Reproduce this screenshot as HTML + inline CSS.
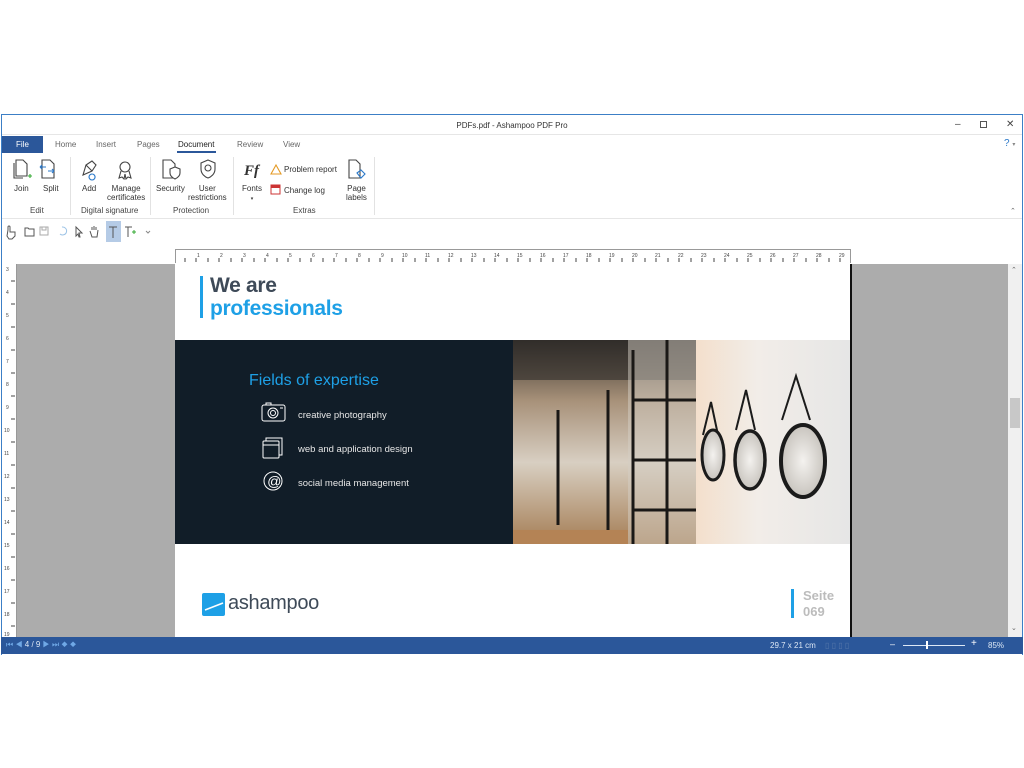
<!DOCTYPE html>
<html><head><meta charset="utf-8"><style>
*{margin:0;padding:0;box-sizing:border-box}
body{width:1024px;height:768px;background:#fff;position:relative;font-family:"Liberation Sans",sans-serif;overflow:hidden}
.a{position:absolute}
.t{font-size:8px;color:#444;white-space:nowrap}
.tab{position:absolute;top:140px;font-size:8px;color:#666}
.lbl{position:absolute;font-size:8px;color:#333;text-align:center;line-height:9px;white-space:nowrap}
.grp{position:absolute;top:206px;font-size:8px;color:#444;white-space:nowrap}
.sep{position:absolute;top:157px;width:1px;height:58px;background:#e2e2e2}
</style></head><body>
<div class="a" style="left:1px;top:114px;width:1022px;height:541px;border:1px solid #3c7fc6;border-bottom:none"></div>
<div class="a t" style="left:0;width:1024px;top:121px;text-align:center;color:#333">PDFs.pdf - Ashampoo PDF Pro</div>
<div class="a t" style="left:955px;top:119px;font-size:10px">–</div>
<div class="a" style="left:980px;top:121px;width:7px;height:7px;border:1px solid #555"></div>
<div class="a t" style="left:1006px;top:119px;font-size:10px">✕</div>
<div class="a" style="left:2px;top:134px;width:1020px;height:1px;background:#e6e6e6"></div>
<div class="a" style="left:2px;top:136px;width:41px;height:17px;background:#2b579a;color:#fff;font-size:8px;text-align:center;line-height:17px">File</div>
<div class="tab" style="left:55px">Home</div>
<div class="tab" style="left:96px">Insert</div>
<div class="tab" style="left:137px">Pages</div>
<div class="tab" style="left:178px;color:#222">Document</div>
<div class="a" style="left:177px;top:151px;width:39px;height:2px;background:#2b579a"></div>
<div class="tab" style="left:237px">Review</div>
<div class="tab" style="left:283px">View</div>
<div class="a t" style="left:1004px;top:138px;color:#2b79c9;font-size:10px">? <span style="color:#888;font-size:6px">▾</span></div>
<svg class="a" style="left:0;top:155px" width="380" height="30" fill="none" stroke="#444" stroke-width="1.1">
<path d="M16 5h7l4 4v12h-11z M14 8v15h9"/><path d="M28 21h4M30 19v4" stroke="#3a3"/>
<path d="M42 5h8l4 4v14h-12z"/><path d="M40 12h6M40 12l2-2M40 12l2 2M48 16h6M54 16l-2-2M54 16l-2 2" stroke="#2b79c9"/>
<path d="M83 20l3-10 6-4 4 4-4 6zM86 10l6 6"/><path d="M92 19a3 3 0 1 0 .1 0" stroke="#2b79c9"/>
<circle cx="125" cy="12" r="5"/><path d="M121 16l-2 7 3-1 2 2 1-5M129 16l2 7-3-1-2 2-1-5"/>
<path d="M163 5h8l4 4v14h-12z"/><path d="M170 14l5-2 5 2v4c0 3-3 5-5 6-2-1-5-3-5-6z" fill="#fff"/>
<path d="M208 5l7 3v6c0 5-4 8-7 9-3-1-7-4-7-9v-6z"/><circle cx="208" cy="13" r="3"/>
<text x="244" y="20" font-family="Liberation Serif" font-style="italic" font-weight="bold" font-size="15" fill="#333" stroke="none">Ff</text>
<path d="M276 10l5 9h-10z" stroke="#e49a25"/>
<path d="M349 5h7l4 4v14h-11z"/><path d="M357 18l4-3 4 4-4 4z" stroke="#2b79c9"/>
</svg>
<svg class="a" style="left:270px;top:183px" width="12" height="12"><rect x="1" y="2" width="9" height="9" fill="#fff" stroke="#c33"/><rect x="1" y="2" width="9" height="3" fill="#c33"/></svg>
<div class="lbl" style="left:14px;top:184px">Join</div>
<div class="lbl" style="left:43px;top:184px">Split</div>
<div class="lbl" style="left:82px;top:184px">Add</div>
<div class="lbl" style="left:107px;top:184px">Manage<br>certificates</div>
<div class="lbl" style="left:156px;top:184px">Security</div>
<div class="lbl" style="left:188px;top:184px">User<br>restrictions</div>
<div class="lbl" style="left:242px;top:184px">Fonts<br><span style="font-size:5px">▾</span></div>
<div class="lbl" style="left:284px;top:165px">Problem report</div>
<div class="lbl" style="left:284px;top:186px">Change log</div>
<div class="lbl" style="left:346px;top:184px">Page<br>labels</div>
<div class="grp" style="left:30px">Edit</div>
<div class="grp" style="left:81px">Digital signature</div>
<div class="grp" style="left:173px">Protection</div>
<div class="grp" style="left:293px">Extras</div>
<div class="sep" style="left:70px"></div><div class="sep" style="left:150px"></div><div class="sep" style="left:233px"></div><div class="sep" style="left:374px"></div>
<div class="a t" style="left:1010px;top:207px;font-size:7px;color:#666">⌃</div>
<div class="a" style="left:2px;top:218px;width:1020px;height:1px;background:#e6e6e6"></div>
<div class="a" style="left:106px;top:221px;width:15px;height:21px;background:#b5cbe6"></div>
<svg class="a" style="left:0;top:222px" width="160" height="20" fill="none" stroke="#555" stroke-width="1">
<path d="M8 8v-3a1 1 0 0 1 2 0v5h5v4l-3 3h-3l-2-3z"/>
<path d="M25 6h3l1 1h5v7h-9z"/><path d="M40 5h8v8h-8z M42 5v3h4v-3" stroke="#aaa"/>
<path d="M62 5a4 4 0 1 1-2 7" stroke="#9cc3e6"/><path d="M76 5l6 6h-3l1 4h-1l-1-3-2 2z"/>
<path d="M92 8v-3M94 8v-4M96 8v-3M90 9l2 6h5l1-7"/>
<path d="M109 5h8M113 5v11"/><path d="M125 5h7M128 5v10" /><path d="M132 10h4M134 8v4" stroke="#3a3"/>
<path d="M146 9l2 2 2-2" stroke="#888"/>
</svg>
<div class="a" style="left:175px;top:249px;width:676px;height:14px;border:1px solid #999;border-bottom:none;background:#fff"></div>
<svg class="a" style="left:175px;top:249px" width="676" height="15" font-size="5" fill="#444" font-family="Liberation Sans">
<g stroke="#444">
<line x1="10" y1="9" x2="10" y2="13"/><line x1="21" y1="9" x2="21" y2="13"/><line x1="33" y1="9" x2="33" y2="13"/><line x1="44" y1="9" x2="44" y2="13"/><line x1="56" y1="9" x2="56" y2="13"/><line x1="67" y1="9" x2="67" y2="13"/><line x1="79" y1="9" x2="79" y2="13"/><line x1="90" y1="9" x2="90" y2="13"/><line x1="102" y1="9" x2="102" y2="13"/><line x1="113" y1="9" x2="113" y2="13"/><line x1="125" y1="9" x2="125" y2="13"/><line x1="136" y1="9" x2="136" y2="13"/><line x1="148" y1="9" x2="148" y2="13"/><line x1="159" y1="9" x2="159" y2="13"/><line x1="171" y1="9" x2="171" y2="13"/><line x1="182" y1="9" x2="182" y2="13"/><line x1="194" y1="9" x2="194" y2="13"/><line x1="205" y1="9" x2="205" y2="13"/><line x1="217" y1="9" x2="217" y2="13"/><line x1="228" y1="9" x2="228" y2="13"/><line x1="240" y1="9" x2="240" y2="13"/><line x1="251" y1="9" x2="251" y2="13"/><line x1="263" y1="9" x2="263" y2="13"/><line x1="274" y1="9" x2="274" y2="13"/><line x1="286" y1="9" x2="286" y2="13"/><line x1="297" y1="9" x2="297" y2="13"/><line x1="309" y1="9" x2="309" y2="13"/><line x1="320" y1="9" x2="320" y2="13"/><line x1="332" y1="9" x2="332" y2="13"/><line x1="343" y1="9" x2="343" y2="13"/><line x1="355" y1="9" x2="355" y2="13"/><line x1="366" y1="9" x2="366" y2="13"/><line x1="378" y1="9" x2="378" y2="13"/><line x1="389" y1="9" x2="389" y2="13"/><line x1="401" y1="9" x2="401" y2="13"/><line x1="412" y1="9" x2="412" y2="13"/><line x1="424" y1="9" x2="424" y2="13"/><line x1="435" y1="9" x2="435" y2="13"/><line x1="447" y1="9" x2="447" y2="13"/><line x1="458" y1="9" x2="458" y2="13"/><line x1="470" y1="9" x2="470" y2="13"/><line x1="481" y1="9" x2="481" y2="13"/><line x1="493" y1="9" x2="493" y2="13"/><line x1="504" y1="9" x2="504" y2="13"/><line x1="516" y1="9" x2="516" y2="13"/><line x1="527" y1="9" x2="527" y2="13"/><line x1="539" y1="9" x2="539" y2="13"/><line x1="550" y1="9" x2="550" y2="13"/><line x1="562" y1="9" x2="562" y2="13"/><line x1="573" y1="9" x2="573" y2="13"/><line x1="585" y1="9" x2="585" y2="13"/><line x1="596" y1="9" x2="596" y2="13"/><line x1="608" y1="9" x2="608" y2="13"/><line x1="619" y1="9" x2="619" y2="13"/><line x1="631" y1="9" x2="631" y2="13"/><line x1="642" y1="9" x2="642" y2="13"/><line x1="654" y1="9" x2="654" y2="13"/><line x1="665" y1="9" x2="665" y2="13"/>
</g>
<text x="22" y="8">1</text><text x="45" y="8">2</text><text x="68" y="8">3</text><text x="91" y="8">4</text><text x="114" y="8">5</text><text x="137" y="8">6</text><text x="160" y="8">7</text><text x="183" y="8">8</text><text x="206" y="8">9</text><text x="227" y="8">10</text><text x="250" y="8">11</text><text x="273" y="8">12</text><text x="296" y="8">13</text><text x="319" y="8">14</text><text x="342" y="8">15</text><text x="365" y="8">16</text><text x="388" y="8">17</text><text x="411" y="8">18</text><text x="434" y="8">19</text><text x="457" y="8">20</text><text x="480" y="8">21</text><text x="503" y="8">22</text><text x="526" y="8">23</text><text x="549" y="8">24</text><text x="572" y="8">25</text><text x="595" y="8">26</text><text x="618" y="8">27</text><text x="641" y="8">28</text><text x="664" y="8">29</text>
</svg>
<div class="a" style="left:2px;top:264px;width:1020px;height:373px;background:#acacac"></div>
<div class="a" style="left:2px;top:264px;width:15px;height:373px;background:#fff;border-right:1px solid #999"></div>
<svg class="a" style="left:3px;top:264px" width="14" height="373" font-size="5" fill="#444" font-family="Liberation Sans">
<g stroke="#444"><line x1="8" y1="17" x2="12" y2="17"/><line x1="8" y1="40" x2="12" y2="40"/><line x1="8" y1="63" x2="12" y2="63"/><line x1="8" y1="86" x2="12" y2="86"/><line x1="8" y1="109" x2="12" y2="109"/><line x1="8" y1="132" x2="12" y2="132"/><line x1="8" y1="155" x2="12" y2="155"/><line x1="8" y1="178" x2="12" y2="178"/><line x1="8" y1="201" x2="12" y2="201"/><line x1="8" y1="224" x2="12" y2="224"/><line x1="8" y1="247" x2="12" y2="247"/><line x1="8" y1="270" x2="12" y2="270"/><line x1="8" y1="293" x2="12" y2="293"/><line x1="8" y1="316" x2="12" y2="316"/><line x1="8" y1="339" x2="12" y2="339"/><line x1="8" y1="362" x2="12" y2="362"/></g>
<text x="3" y="7">3</text><text x="3" y="30">4</text><text x="3" y="53">5</text><text x="3" y="76">6</text><text x="3" y="99">7</text><text x="3" y="122">8</text><text x="3" y="145">9</text><text x="1" y="168">10</text><text x="1" y="191">11</text><text x="1" y="214">12</text><text x="1" y="237">13</text><text x="1" y="260">14</text><text x="1" y="283">15</text><text x="1" y="306">16</text><text x="1" y="329">17</text><text x="1" y="352">18</text><text x="1" y="372">19</text>
</svg>
<div class="a" style="left:1008px;top:264px;width:14px;height:373px;background:#f0f0f0"></div>
<div class="a" style="left:1010px;top:398px;width:10px;height:30px;background:#c8c8c8"></div>
<div class="a t" style="left:1011px;top:266px;font-size:7px;color:#666">⌃</div>
<div class="a t" style="left:1011px;top:624px;font-size:7px;color:#666">⌄</div>
<div class="a" style="left:175px;top:264px;width:675px;height:373px;background:#fff;overflow:hidden">
  <div class="a" style="left:25px;top:12px;width:3px;height:42px;background:#1ea0e6"></div>
  <div class="a" style="left:35px;top:10px;font-size:21px;font-weight:bold;color:#3e4a58;line-height:23px;letter-spacing:-0.3px">We are</div>
  <div class="a" style="left:35px;top:33px;font-size:21px;font-weight:bold;color:#1ea0e6;line-height:23px;letter-spacing:-0.3px">professionals</div>
  <div class="a" style="left:0;top:76px;width:338px;height:204px;background:#111d28"></div>
  <div class="a" style="left:74px;top:108px;font-size:16px;color:#1ea0e6">Fields of expertise</div>
  <svg class="a" style="left:85px;top:138px" width="30" height="90" fill="none" stroke="#fff" stroke-width="1">
    <rect x="2" y="3" width="23" height="16" rx="2"/><circle cx="13" cy="11" r="5"/><circle cx="13" cy="11" r="2.5"/><path d="M6 3v-2h5v2M20 6h3"/>
    <rect x="3" y="39" width="16" height="17" rx="1"/><path d="M6 39v-3h16v17h-3M3 43h16"/>
    <circle cx="13" cy="79" r="9"/><text x="7" y="84" font-size="14" font-style="italic" fill="#fff" stroke="none" font-family="Liberation Sans">@</text>
  </svg>
  <div class="a" style="left:123px;top:146px;font-size:9.5px;color:#e6e6e6">creative photography</div>
  <div class="a" style="left:123px;top:180px;font-size:9.5px;color:#e6e6e6">web and application design</div>
  <div class="a" style="left:123px;top:214px;font-size:9.5px;color:#e6e6e6">social media management</div>
  <svg class="a" style="left:338px;top:76px" width="337" height="204">
    <defs>
      <linearGradient id="hall" x1="0" y1="0" x2="0" y2="1"><stop offset="0" stop-color="#3a332d"/><stop offset=".3" stop-color="#a8927a"/><stop offset=".6" stop-color="#d8cfc2"/><stop offset="1" stop-color="#a57e55"/></linearGradient>
      <linearGradient id="wall" x1="0" y1="0" x2="1" y2="0"><stop offset="0" stop-color="#f3dfcc"/><stop offset=".4" stop-color="#f2ede8"/><stop offset="1" stop-color="#e6e6e6"/></linearGradient>
      <radialGradient id="face"><stop offset="0" stop-color="#f4f2ef"/><stop offset="1" stop-color="#c8c4be"/></radialGradient>
    </defs>
    <rect width="337" height="204" fill="url(#hall)"/>
    <rect x="0" y="0" width="183" height="40" fill="#2c2a28" opacity=".6"/>
    <rect x="115" y="0" width="68" height="204" fill="#d4cdc4" opacity=".5"/>
    <g stroke="#1a1816" stroke-width="3"><line x1="120" y1="10" x2="120" y2="204"/><line x1="154" y1="0" x2="154" y2="204"/><line x1="120" y1="60" x2="183" y2="60"/><line x1="120" y1="120" x2="183" y2="120"/><line x1="120" y1="170" x2="183" y2="170"/><line x1="45" y1="70" x2="45" y2="185"/><line x1="95" y1="50" x2="95" y2="204"/></g>
    <rect x="0" y="190" width="115" height="14" fill="#b48355"/>
    <rect x="183" y="0" width="154" height="204" fill="url(#wall)"/>
    <g stroke="#1b1b1b" stroke-width="2" fill="none"><path d="M190 95l8-33 7 33"/><path d="M223 90l10-40 9 40"/><path d="M269 80l14-44 14 44"/></g>
    <ellipse cx="200" cy="115" rx="11" ry="25" fill="url(#face)" stroke="#1b1b1b" stroke-width="3"/>
    <ellipse cx="237" cy="120" rx="15" ry="29" fill="url(#face)" stroke="#1b1b1b" stroke-width="3.5"/>
    <ellipse cx="290" cy="121" rx="22" ry="36" fill="url(#face)" stroke="#1b1b1b" stroke-width="4"/>
  </svg>
  <svg class="a" style="left:27px;top:329px" width="24" height="24"><rect width="23" height="23" rx="2" fill="#1ea0e6"/><path d="M3 17L21 10" stroke="#fff" stroke-width="1.5"/></svg>
  <div class="a" style="left:53px;top:328px;font-size:20px;color:#3e4a58;letter-spacing:-0.3px">ashampoo</div>
  <div class="a" style="left:616px;top:325px;width:3px;height:29px;background:#1ea0e6"></div>
  <div class="a" style="left:628px;top:324px;font-size:13px;font-weight:bold;color:#bcbcbc;line-height:16px">Seite<br>069</div>
</div>
<div class="a" style="left:850px;top:264px;width:2px;height:373px;background:#111"></div>
<div class="a" style="left:1px;top:637px;width:1022px;height:17px;background:#2b579a"></div>
<div class="a t" style="left:6px;top:640px;color:#6fa8e6;font-size:8px">⏮ ◀ <span style="color:#dde8f5">4 / 9</span> ▶ ⏭ ◆ ◆</div>
<div class="a t" style="left:770px;top:641px;color:#dde8f5">29.7 x 21 cm</div>
<div class="a t" style="left:825px;top:641px;color:#5577aa">▯ ▯ ▯ ▯</div>
<div class="a t" style="left:890px;top:639px;color:#fff;font-size:9px">–</div>
<div class="a" style="left:903px;top:645px;width:62px;height:1px;background:#dde8f5"></div>
<div class="a" style="left:926px;top:641px;width:2px;height:8px;background:#fff"></div>
<div class="a t" style="left:971px;top:638px;color:#fff;font-size:10px">+</div>
<div class="a t" style="left:988px;top:641px;color:#dde8f5">85%</div>
</body></html>
